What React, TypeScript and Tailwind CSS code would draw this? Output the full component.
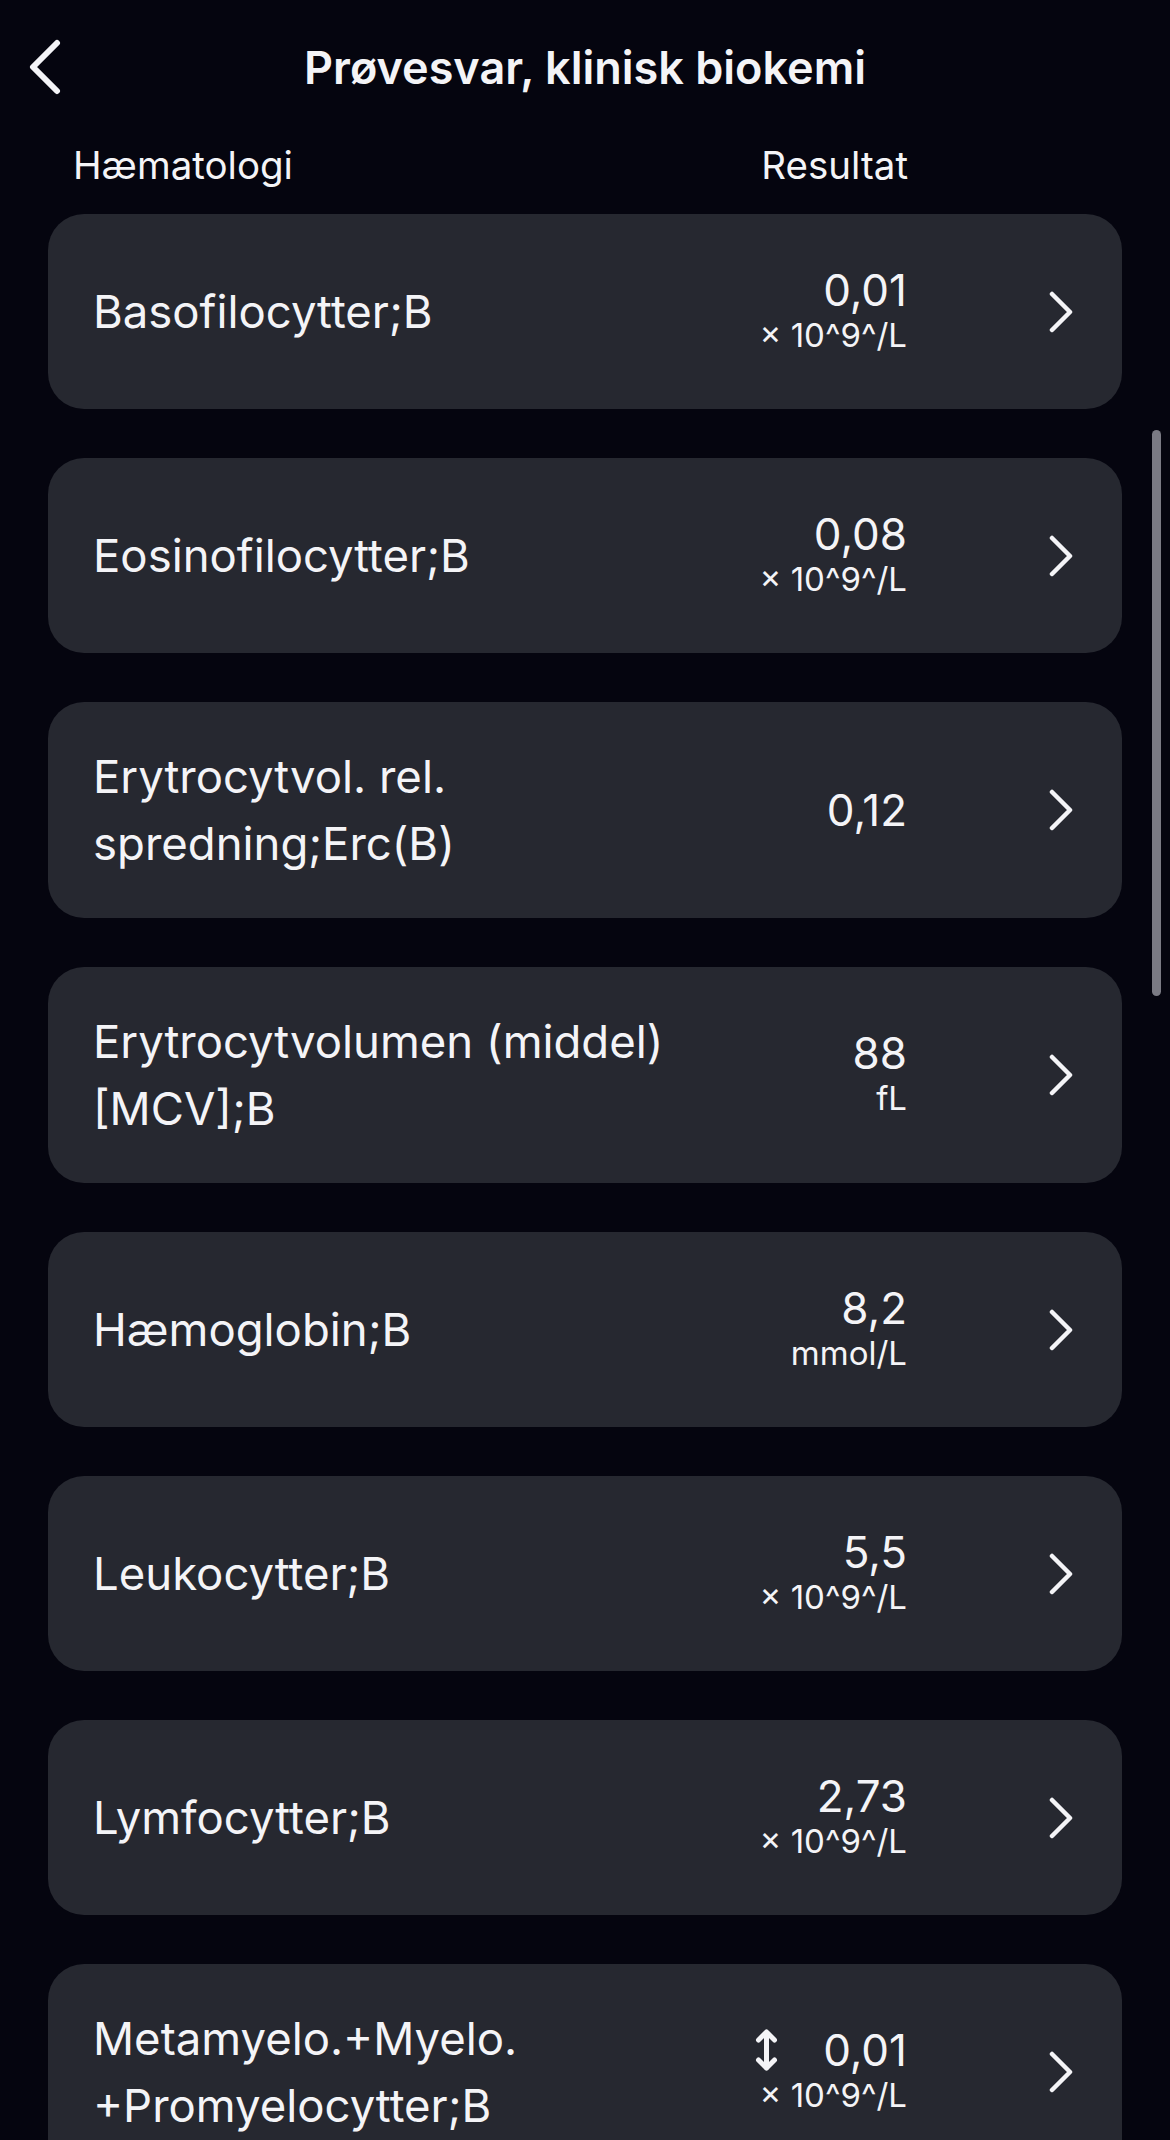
import React from "react";

type Result = {
  label: string[];
  value: string;
  unit?: string;
  flagged?: boolean;
};

const results: Result[] = [
  { label: ["Basofilocytter;B"], value: "0,01", unit: "× 10^9^/L" },
  { label: ["Eosinofilocytter;B"], value: "0,08", unit: "× 10^9^/L" },
  { label: ["Erytrocytvol. rel.", "spredning;Erc(B)"], value: "0,12" },
  { label: ["Erytrocytvolumen (middel)", "[MCV];B"], value: "88", unit: "fL" },
  { label: ["Hæmoglobin;B"], value: "8,2", unit: "mmol/L" },
  { label: ["Leukocytter;B"], value: "5,5", unit: "× 10^9^/L" },
  { label: ["Lymfocytter;B"], value: "2,73", unit: "× 10^9^/L" },
  {
    label: ["Metamyelo.+Myelo.", "+Promyelocytter;B"],
    value: "0,01",
    unit: "× 10^9^/L",
    flagged: true,
  },
];

const ChevronRight = () => (
  <svg width="24" height="42" viewBox="0 0 24 42" fill="none" className="shrink-0">
    <path
      d="M3 3 L21 21 L3 39"
      stroke="currentColor"
      strokeWidth="4.5"
      strokeLinecap="round"
      strokeLinejoin="round"
    />
  </svg>
);

const ArrowUpDown = () => (
  <svg width="23" height="44" viewBox="0 0 23 44" fill="none" className="shrink-0">
    <path
      d="M11.5 4 V40 M3.5 12 L11.5 4 L19.5 12 M3.5 32 L11.5 40 L19.5 32"
      stroke="currentColor"
      strokeWidth="5"
      strokeLinecap="round"
      strokeLinejoin="round"
    />
  </svg>
);

const ResultCard: React.FC<{ item: Result }> = ({ item }) => (
  <div className="flex min-h-[195px] items-center rounded-[36px] bg-[#262830] py-[41px] pl-[45px] pr-[49px]">
    <div className="flex-1 text-[45.5px] leading-[67px]">
      {item.label.map((line) => (
        <div key={line}>{line}</div>
      ))}
    </div>
    <div className="flex flex-col items-end">
      <div className="flex items-center gap-[45px]">
        {item.flagged && <ArrowUpDown />}
        <span className="text-[44px] leading-[46px]">{item.value}</span>
      </div>
      {item.unit && <span className="text-[33px] leading-[44px]">{item.unit}</span>}
    </div>
    <div className="ml-[142px]">
      <ChevronRight />
    </div>
  </div>
);

export default function App() {
  return (
    <div className="relative h-[2140px] w-full overflow-hidden bg-[#05050f] font-['Inter',sans-serif] text-[#f4f4f7]">
      <div className="grid h-[134px] grid-cols-[1fr_auto_1fr] items-center">
        <button className="justify-self-start pl-[28px]">
          <svg width="33" height="56" viewBox="0 0 33 56" fill="none">
            <path
              d="M29 4 L5 28 L29 52"
              stroke="currentColor"
              strokeWidth="6"
              strokeLinecap="round"
              strokeLinejoin="round"
            />
          </svg>
        </button>
        <h1 className="text-[45px] font-semibold leading-none">
          Prøvesvar, klinisk biokemi
        </h1>
        <div />
      </div>

      <div className="mb-[16px] flex h-[64px] items-center justify-between pl-[73px] pr-[262px] text-[38.5px]">
        <span>Hæmatologi</span>
        <span>Resultat</span>
      </div>

      <div className="mx-[48px] flex flex-col gap-[49px]">
        {results.map((item) => (
          <ResultCard key={item.label.join(" ")} item={item} />
        ))}
      </div>

      <div className="absolute right-[9px] top-[430px] h-[566px] w-[9px] rounded-full bg-[#7b7b84]" />
    </div>
  );
}
